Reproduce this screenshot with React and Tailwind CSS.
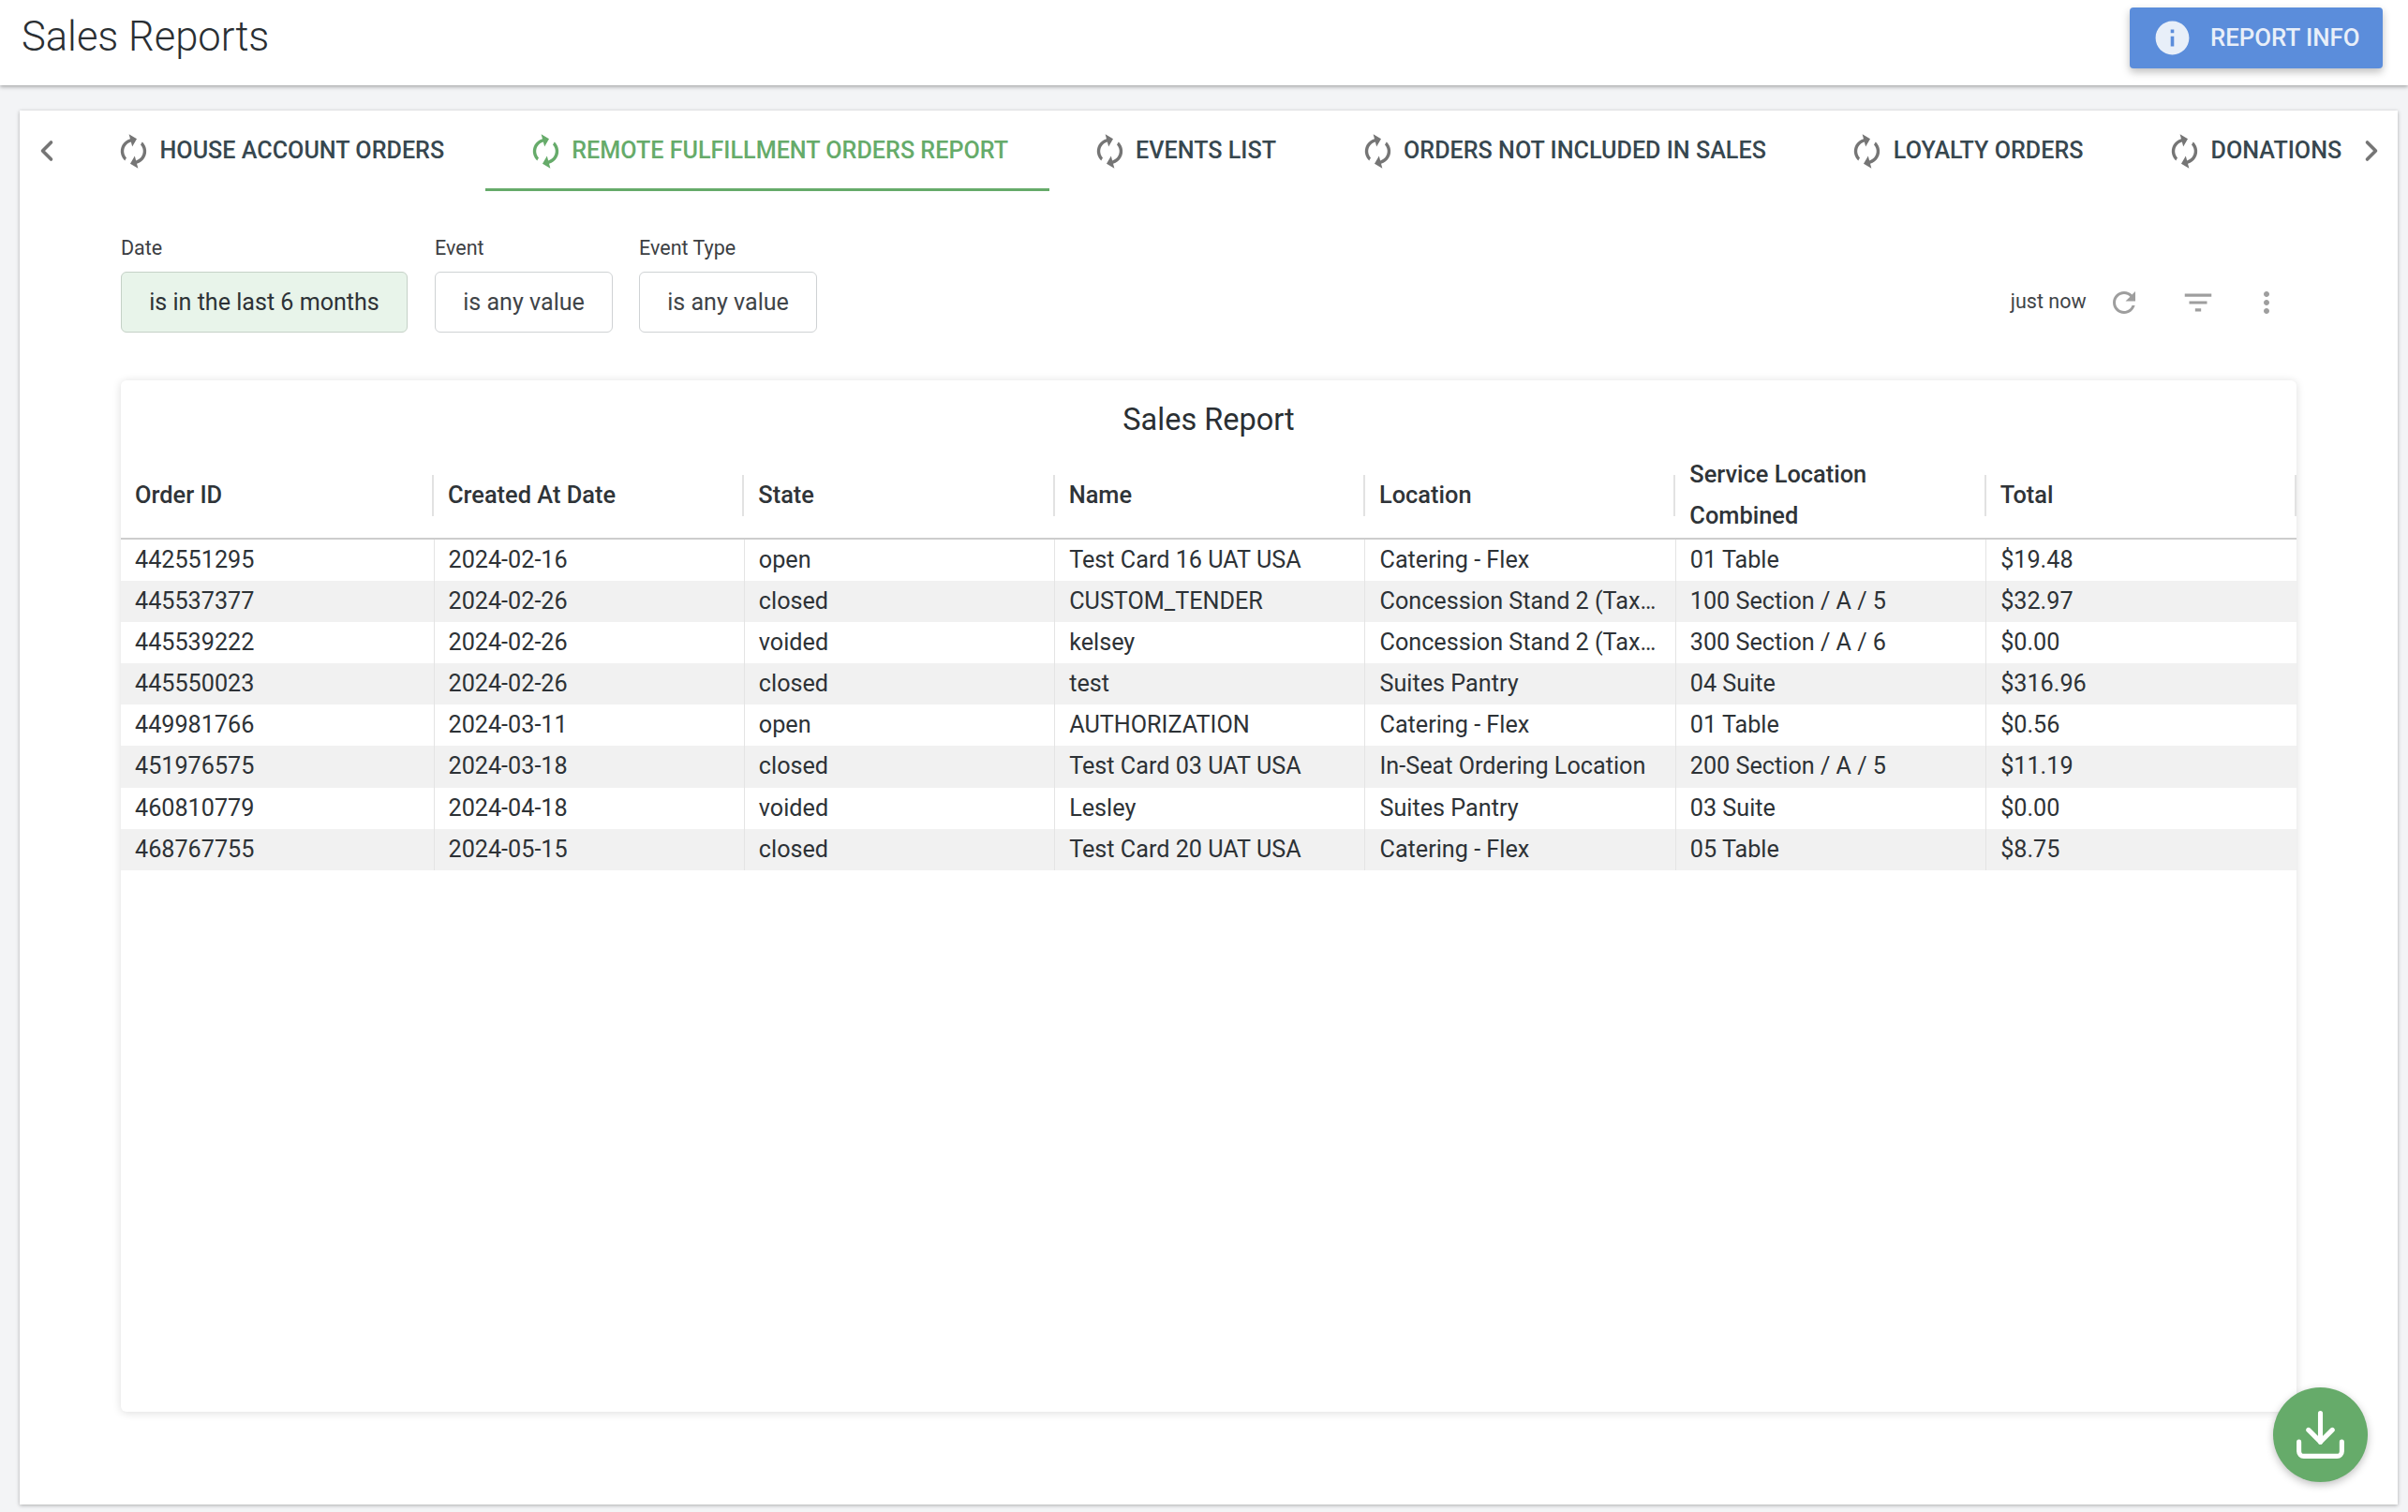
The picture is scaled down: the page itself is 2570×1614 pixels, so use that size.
import React from "react";
import { Download, ChevronLeft, ChevronRight } from "lucide-react";

const AUTORENEW = "M12 6v3l4-4-4-4v3c-4.42 0-8 3.58-8 8 0 1.57.46 3.03 1.24 4.26L6.7 14.8c-.45-.83-.7-1.79-.7-2.8 0-3.31 2.69-6 6-6zm6.76 1.74L17.3 9.2c.44.84.7 1.79.7 2.8 0 3.31-2.69 6-6 6v-3l-4 4 4 4v-3c4.42 0 8-3.58 8-8 0-1.57-.46-3.03-1.24-4.26z";

const TABS = [
  "HOUSE ACCOUNT ORDERS",
  "REMOTE FULFILLMENT ORDERS REPORT",
  "EVENTS LIST",
  "ORDERS NOT INCLUDED IN SALES",
  "LOYALTY ORDERS",
  "DONATIONS",
];

const COLUMNS = ["Order ID", "Created At Date", "State", "Name", "Location", "Service Location Combined", "Total"];

const ROWS = [
  ["442551295", "2024-02-16", "open", "Test Card 16 UAT USA", "Catering - Flex", "01 Table", "$19.48"],
  ["445537377", "2024-02-26", "closed", "CUSTOM_TENDER", "Concession Stand 2 (Tax…", "100 Section / A / 5", "$32.97"],
  ["445539222", "2024-02-26", "voided", "kelsey", "Concession Stand 2 (Tax…", "300 Section / A / 6", "$0.00"],
  ["445550023", "2024-02-26", "closed", "test", "Suites Pantry", "04 Suite", "$316.96"],
  ["449981766", "2024-03-11", "open", "AUTHORIZATION", "Catering - Flex", "01 Table", "$0.56"],
  ["451976575", "2024-03-18", "closed", "Test Card 03 UAT USA", "In-Seat Ordering Location", "200 Section / A / 5", "$11.19"],
  ["460810779", "2024-04-18", "voided", "Lesley", "Suites Pantry", "03 Suite", "$0.00"],
  ["468767755", "2024-05-15", "closed", "Test Card 20 UAT USA", "Catering - Flex", "05 Table", "$8.75"],
];

function Mi({ d, className }) {
  return (
    <svg viewBox="0 0 24 24" fill="currentColor" className={className}>
      <path d={d} />
    </svg>
  );
}

function Tab({ label, active }) {
  return (
    <div
      className={
        "flex h-full shrink-0 items-center border-b-[3px] pl-[44px] pr-[43.5px] pt-[3px] " +
        (active ? "border-[#66ab6a] text-[#66ab6a]" : "border-transparent text-[#37474f]")
      }
    >
      <Mi
        d={AUTORENEW}
        className={"mr-[7.5px] h-[41px] w-[41px] shrink-0 -rotate-[15deg] " + (active ? "text-[#66ab6a]" : "text-[#757575]")}
      />
      <span className="whitespace-nowrap text-[25.15px] font-medium leading-none">{label}</span>
    </div>
  );
}

function Filter({ label, value, active, width }) {
  return (
    <div className={"flex flex-col " + width}>
      <span className="text-[21.5px] leading-[24px] text-[#3c4043]">{label}</span>
      <div
        className={
          "mt-[13px] flex h-[65px] items-center justify-center whitespace-nowrap rounded-[6px] border text-[25.1px] " +
          (active ? "border-[#c5d1c7] bg-[#e8f4ea] text-[#2d3236]" : "border-[#cfd2d4] bg-white text-[#3f4448]")
        }
      >
        {value}
      </div>
    </div>
  );
}

export default function App() {
  return (
    <div className="flex h-[1614px] w-[2570px] flex-col overflow-hidden bg-[#f3f4f6] font-[Roboto,sans-serif]">
      <header className="relative flex h-[91px] shrink-0 items-center justify-between bg-white pl-[23px] pr-[27px] shadow-[0_2px_4px_rgba(0,0,0,0.3)]">
        <h1 className="-mt-[11px] text-[43.5px] font-light leading-none text-[#2a2f33]">Sales Reports</h1>
        <button className="mt-[8px] flex h-[65px] w-[270px] items-center self-start rounded-[4px] bg-[#5b8ddb] pl-[24px] text-[#e8eff9] shadow-[0_4px_8px_rgba(0,0,0,0.25)]">
          <Mi
            d="M12 2C6.48 2 2 6.48 2 12s4.48 10 10 10 10-4.48 10-10S17.52 2 12 2zm1 15h-2v-6h2v6zm0-8h-2V7h2v2z"
            className="h-[43px] w-[43px] shrink-0"
          />
          <span className="ml-[19px] whitespace-nowrap text-[25.8px] font-medium leading-none">REPORT INFO</span>
        </button>
      </header>

      <main className="relative ml-[21px] mr-[11px] mt-[27px] flex h-[1488px] flex-col bg-white shadow-[0_1px_4px_rgba(0,0,0,0.3)]">
        <nav className="flex h-[86px] shrink-0">
          <div className="flex w-[57px] shrink-0 items-center pl-[11px] text-[#757575]">
            <ChevronLeft size={36} strokeWidth={2.4} />
          </div>
          <div className="flex min-w-0 flex-1 overflow-hidden">
            {TABS.map((t) => (
              <Tab key={t} label={t} active={t.startsWith("REMOTE")} />
            ))}
          </div>
          <div className="flex w-[52px] shrink-0 items-center justify-center pr-[4px] text-[#757575]">
            <ChevronRight size={36} strokeWidth={2.4} />
          </div>
        </nav>

        <section className="mx-[108px] mt-[49px] flex shrink-0 items-end">
          <Filter label="Date" value="is in the last 6 months" active width="w-[306px]" />
          <div className="w-[29px]" />
          <Filter label="Event" value="is any value" width="w-[190px]" />
          <div className="w-[28px]" />
          <Filter label="Event Type" value="is any value" width="w-[190px]" />
          <div className="ml-auto flex h-[65px] items-center text-[#9e9e9e]">
            <span className="mr-[22px] text-[21.5px] text-[#3f4448]">just now</span>
            <Mi
              d="M17.65 6.35C16.2 4.9 14.21 4 12 4c-4.42 0-7.99 3.58-7.99 8s3.57 8 7.99 8c3.73 0 6.84-2.55 7.73-6h-2.08c-.82 2.33-3.04 4-5.65 4-3.31 0-6-2.69-6-6s2.69-6 6-6c1.66 0 3.14.69 4.22 1.78L13 11h7V4l-2.35 2.35z"
              className="h-[36px] w-[36px]"
            />
            <Mi d="M10 18h4v-2h-4v2zM3 6v2h18V6H3zm3 7h12v-2H6v2z" className="ml-[42.8px] h-[38px] w-[38px]" />
            <Mi
              d="M12 8c1.1 0 2-.9 2-2s-.9-2-2-2-2 .9-2 2 .9 2 2 2zm0 2c-1.1 0-2 .9-2 2s.9 2 2 2 2-.9 2-2-.9-2-2-2zm0 6c-1.1 0-2 .9-2 2s.9 2 2 2 2-.9 2-2-.9-2-2-2z"
              className="ml-[35.6px] mr-[14px] h-[36px] w-[36px]"
            />
          </div>
        </section>

        <section className="mx-[108px] mt-[51px] h-[1101px] shrink-0 rounded-[6px] bg-white shadow-[0_1px_10px_rgba(0,0,0,0.14)]">
          <h2 className="flex h-[78px] items-center justify-center pt-[6px] text-[32.5px] font-normal leading-none text-[#2a2f33]">Sales Report</h2>
          <table className="w-full table-fixed border-collapse text-[25.2px]">
            <colgroup>
              <col className="w-[334px]" />
              <col />
              <col />
              <col />
              <col />
              <col />
              <col />
            </colgroup>
            <thead>
              <tr className="h-[90px] border-b-2 border-[#cdcdcd]">
                {COLUMNS.map((c) => (
                  <th key={c} className="relative px-[15px] pb-[2px] text-left align-middle text-[25.4px] font-medium leading-[44px] text-[#2f3438]">
                    {c}
                    <span className="absolute right-0 top-[23px] h-[44px] w-[2px] bg-[#e2e2e2]" />
                  </th>
                ))}
              </tr>
            </thead>
            <tbody>
              {ROWS.map((r, i) => (
                <tr key={r[0]} className={"h-[44.1px] " + (i % 2 ? "bg-[#f1f1f1]" : "bg-white")}>
                  {r.map((v, j) => (
                    <td
                      key={j}
                      className={
                        "whitespace-nowrap px-[15px] py-0 leading-[44.1px] text-[#2d3236] " + (j < 6 ? "border-r border-[#e4e4e4]" : "")
                      }
                    >
                      {v}
                    </td>
                  ))}
                </tr>
              ))}
            </tbody>
          </table>
        </section>

        <button className="absolute bottom-[24px] right-[32px] flex h-[101px] w-[101px] items-center justify-center rounded-full bg-[#66ab6a] text-white shadow-[0_3px_8px_rgba(0,0,0,0.25)]">
          <Download size={61} strokeWidth={2} />
        </button>
      </main>
    </div>
  );
}
